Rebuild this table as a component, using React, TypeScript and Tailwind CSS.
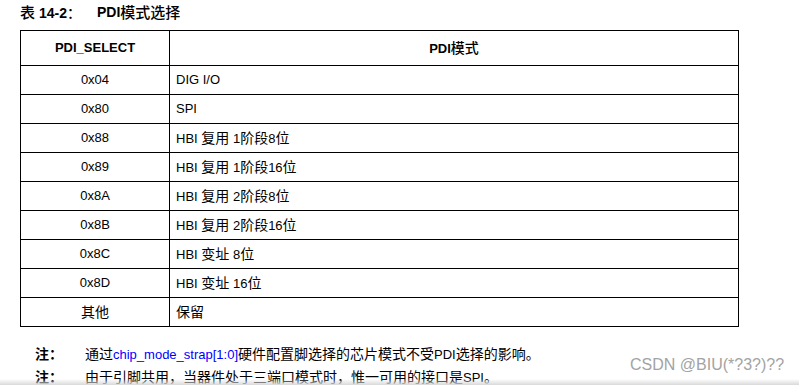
import React from "react";

const rows: [string, string][] = [
  ["0x04", "DIG I/O"],
  ["0x80", "SPI"],
  ["0x88", "HBI 复用 1阶段8位"],
  ["0x89", "HBI 复用 1阶段16位"],
  ["0x8A", "HBI 复用 2阶段8位"],
  ["0x8B", "HBI 复用 2阶段16位"],
  ["0x8C", "HBI 变址 8位"],
  ["0x8D", "HBI 变址 16位"],
  ["其他", "保留"],
];

const font = { fontFamily: '"Liberation Sans", Arial, "Noto Sans CJK SC", sans-serif' };

function Mix({ text, cjk }: { text: string; cjk: string }) {
  const parts = text.split(/([\u3000-\u9fff\uff00-\uffef]+)/);
  return (
    <>
      {parts.map((p, i) =>
        i % 2 === 1 ? (
          <span key={i} className={cjk}>
            {p}
          </span>
        ) : (
          <React.Fragment key={i}>{p}</React.Fragment>
        )
      )}
    </>
  );
}

export default function App() {
  return (
    <div
      className="relative w-[799px] h-[385px] overflow-hidden bg-white text-black"
      style={font}
    >
      <div className="flex items-center h-[24px] pl-[20px] text-[14px] leading-none">
        <span className="font-bold w-[77px]">
          <span className="font-medium text-[15px]">表</span> 14-2<span className="font-medium">：</span>
        </span>
        <span className="font-bold">PDI</span>
        <span className="font-medium text-[15px]">模式选择</span>
      </div>
      <table className="ml-[20px] mt-[6px] w-[719px] border-collapse text-[13px]">
        <thead>
          <tr className="h-[35px]">
            <th className="w-[149px] border border-black font-bold text-center align-middle">
              PDI_SELECT
            </th>
            <th className="border border-black font-bold text-center align-middle">
              PDI<span className="font-medium text-[14px]">模式</span>
            </th>
          </tr>
        </thead>
        <tbody>
          {rows.map(([a, b], i) => (
            <tr key={i} className="h-[29px]">
              <td className="border border-black text-center align-middle">
                <Mix text={a} cjk="text-[14px]" />
              </td>
              <td className="border border-black pl-[6px] align-middle">
                <Mix text={b} cjk="text-[14px]" />
              </td>
            </tr>
          ))}
        </tbody>
      </table>
      <div className="mt-[16px] text-[13px] leading-[23px]">
        <div className="flex">
          <span className="w-[85px] pl-[35px] font-bold text-[14px]">注：</span>
          <span>
            <Mix text="通过" cjk="text-[14px]" />
            <span className="text-[#0000ff]">chip_mode_strap[1:0]</span>
            <Mix text="硬件配置脚选择的芯片模式不受PDI选择的影响。" cjk="text-[14px]" />
          </span>
        </div>
        <div className="flex">
          <span className="w-[85px] pl-[35px] font-bold text-[14px]">注：</span>
          <span>
            <Mix text="由于引脚共用，当器件处于三端口模式时，惟一可用的接口是SPI。" cjk="text-[14px]" />
          </span>
        </div>
      </div>
      <div className="absolute left-[630px] top-[357px] text-[16px] leading-none text-[#a3a3a3]">
        CSDN @BIU(*?3?)??
      </div>
      <div className="absolute left-0 bottom-0 w-full h-[6px] bg-gradient-to-b from-white/0 to-[#d9d9d9]" />
    </div>
  );
}
